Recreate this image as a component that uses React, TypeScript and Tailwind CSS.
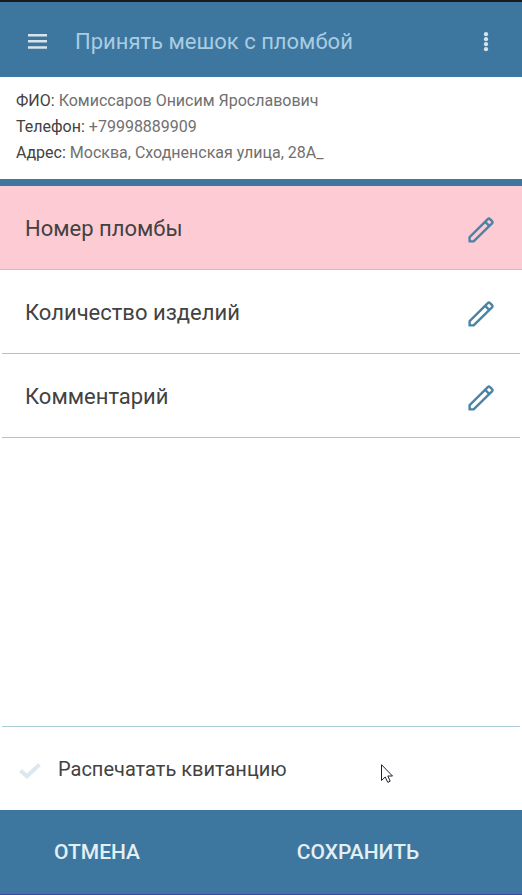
import React from "react";

const client = [
  { label: "ФИО:", value: "Комиссаров Онисим Ярославович" },
  { label: "Телефон:", value: "+79998889909" },
  { label: "Адрес:", value: "Москва, Сходненская улица, 28А_" },
];

const fields = [
  { name: "Номер пломбы", required: true },
  { name: "Количество изделий", required: false },
  { name: "Комментарий", required: false },
];

function Pencil() {
  return (
    <svg className="size-[26px]" viewBox="0 0 26 26" fill="none" stroke="#4a83a5" strokeWidth="2.4" strokeLinejoin="round" aria-hidden="true">
      <path d="M1.6 24.4V20.2L19.8 2.1Q20.9 1.1 22 2.1L24 4.1Q25 5.2 24 6.3L5.6 24.4Z" />
      <path d="M17.2 4.8L21.2 8.8" />
    </svg>
  );
}

export default function App() {
  return (
    <div className="relative flex min-h-screen flex-col border-t-2 border-b border-t-[#171c20] border-b-[#3a4aa0] bg-white font-[Roboto,sans-serif] text-[#424242]">
      <header className="flex h-[75px] items-center bg-[#3d779f] pt-1 pr-[26px] pl-7">
        <button type="button" aria-label="Меню">
          <svg className="h-[15px] w-[19px]" viewBox="0 0 19 15" fill="#d7e5ea" aria-hidden="true">
            <path d="M0 0h19v2.5H0zM0 6.1h19v2.5H0zM0 12.3h19v2.5H0z" />
          </svg>
        </button>
        <h1 className="ml-7 flex-1 text-[22px] leading-7 text-[#a9cce1]">Принять мешок с пломбой</h1>
        <button type="button" aria-label="Ещё" className="flex w-5 justify-center">
          <svg className="h-5 w-[6px]" viewBox="0 0 6 20" fill="#d7e5ea" aria-hidden="true">
            <circle cx="3" cy="2.2" r="2.1" />
            <circle cx="3" cy="7.2" r="2.1" />
            <circle cx="3" cy="12.2" r="2.1" />
            <circle cx="3" cy="17.2" r="2.1" />
          </svg>
        </button>
      </header>

      <dl className="border-b-[7px] border-[#3d779f] px-4 pt-[11px] pb-[13px] text-base leading-[26px]">
        {client.map((c) => (
          <div key={c.label} className="flex gap-1">
            <dt className="text-[#424242]">{c.label}</dt>
            <dd className="text-[#707070]">{c.value}</dd>
          </div>
        ))}
      </dl>

      <ul>
        {fields.map((f) => (
          <li key={f.name} className={f.required ? "bg-[#fdcbd4]" : "bg-white px-[2px]"}>
            <button
              type="button"
              className={`flex h-[84px] w-full items-center justify-between border-b pt-1 text-left text-[22px] leading-7 ${
                f.required ? "border-[#dcb7bf] pr-7 pl-[25px]" : "border-[#bdbdbd] pr-[26px] pl-[23px]"
              }`}
            >
              <span className="pb-[2px]">{f.name}</span>
              <Pencil />
            </button>
          </li>
        ))}
      </ul>

      <div className="flex-1" />

      <label className="mx-[2px] flex h-[84px] items-center border-t border-[#a9ccd9] pl-4 text-xl leading-7">
        <span className="grid size-6 place-items-center">
          <input type="checkbox" defaultChecked className="peer col-start-1 row-start-1 size-6 appearance-none" />
          <svg className="pointer-events-none col-start-1 row-start-1 mt-1 hidden h-4 w-[22px] peer-checked:block" viewBox="0 0 22 16" fill="none" stroke="#dce8ee" strokeWidth="4" aria-hidden="true">
            <path d="M1.5 7.5L8 13.2L20.5 1.5" />
          </svg>
        </span>
        <span className="ml-4">Распечатать квитанцию</span>
      </label>

      <footer className="flex h-[84px] bg-[#3d779f] text-[21px] leading-7 font-medium text-[#e4eff3]">
        <button type="button" className="px-[54px]">ОТМЕНА</button>
        <button type="button" className="flex-1">СОХРАНИТЬ</button>
      </footer>

      <svg className="pointer-events-none absolute bottom-[111px] left-[381px] h-[19px] w-3" viewBox="0 0 12 19" fill="white" stroke="#20202c" aria-hidden="true">
        <path d="M.5.7V16.5L4.2 13L6.8 18.4L9.2 17.2L6.8 12H11.5Z" />
      </svg>
    </div>
  );
}
